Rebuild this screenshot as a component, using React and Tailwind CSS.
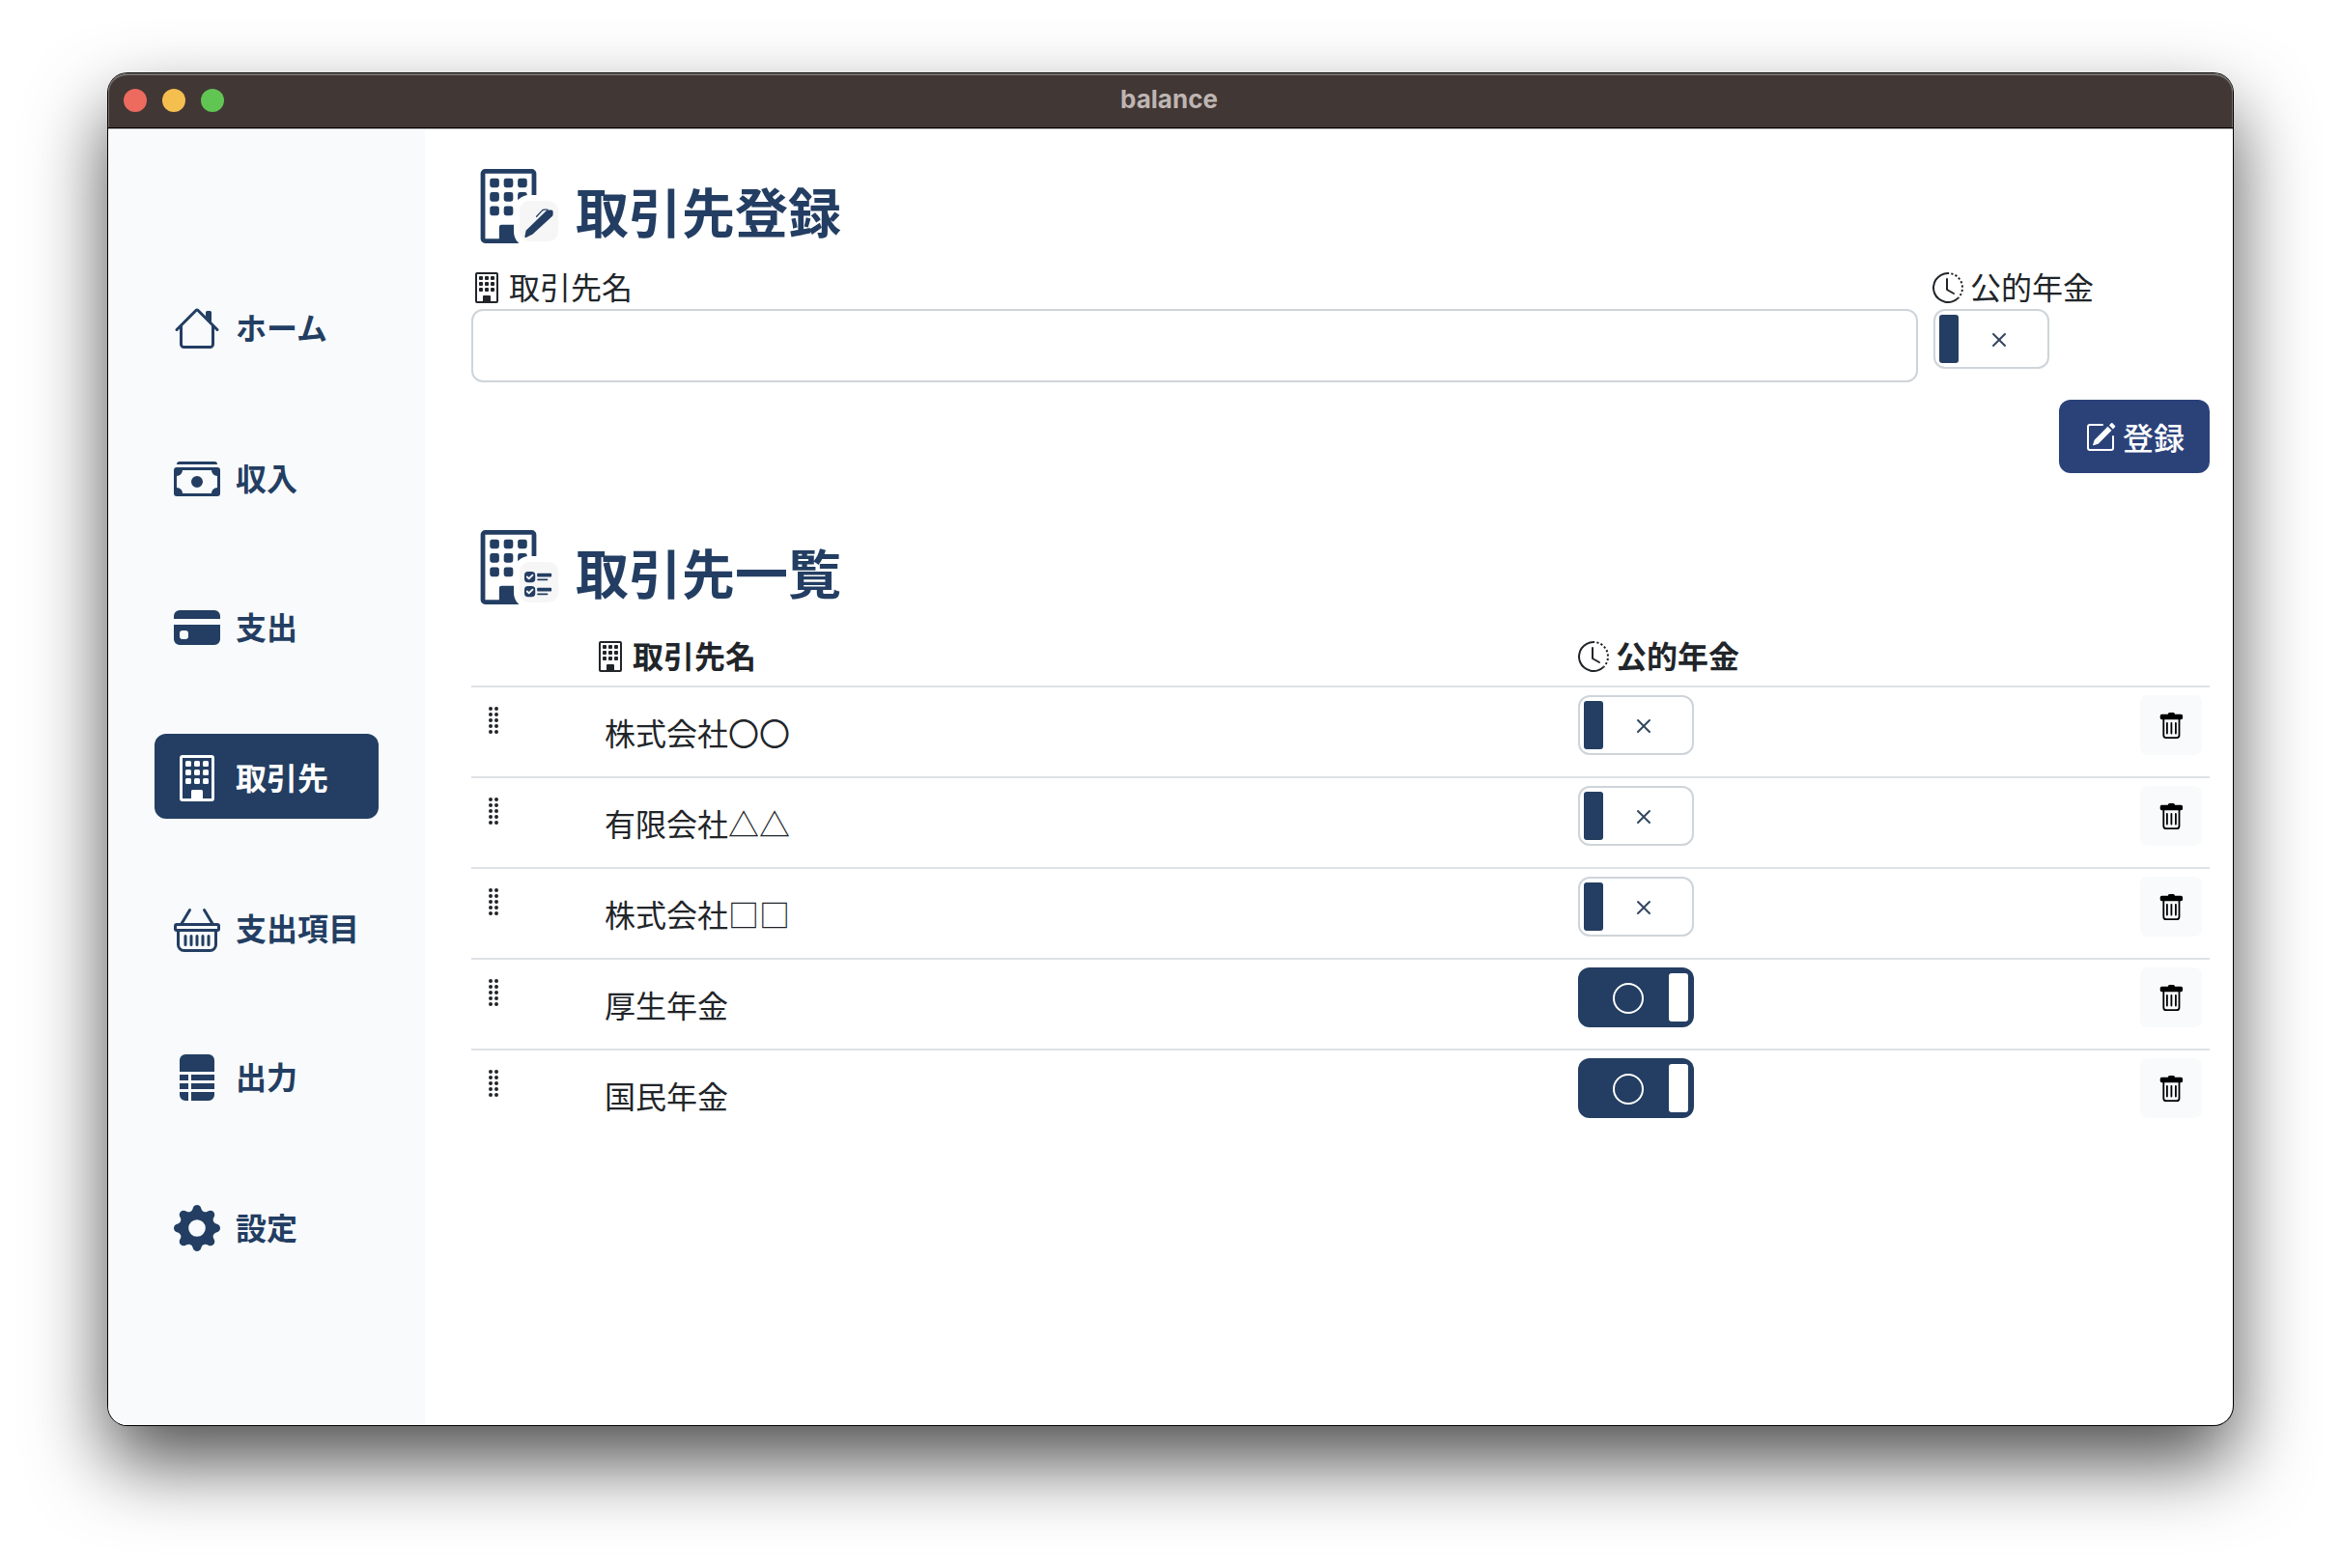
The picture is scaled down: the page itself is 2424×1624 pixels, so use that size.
import React from "react";
import {
  BsBasket,
  BsBuilding,
  BsCashStack,
  BsCircle,
  BsClockHistory,
  BsCreditCardFill,
  BsFileRuledFill,
  BsGearFill,
  BsGripVertical,
  BsPencilSquare,
  BsUiChecks,
  BsX,
} from "react-icons/bs";

function HouseIcon({ className }) {
  return (
    <svg className={className} viewBox="0 0 16 16" fill="currentColor">
      <path
        fillRule="evenodd"
        d="M2 13.5V7h1v6.5a.5.5 0 0 0 .5.5h9a.5.5 0 0 0 .5-.5V7h1v6.5a1.5 1.5 0 0 1-1.5 1.5h-9A1.5 1.5 0 0 1 2 13.5zm11-11V6l-2-2V2.5a.5.5 0 0 1 .5-.5h1a.5.5 0 0 1 .5.5z"
      />
      <path
        fillRule="evenodd"
        d="M7.293 1.5a1 1 0 0 1 1.414 0l6.647 6.646a.5.5 0 0 1-.708.708L8 2.207 1.354 8.854a.5.5 0 1 1-.708-.708L7.293 1.5z"
      />
    </svg>
  );
}

function TrashIcon({ className }) {
  return (
    <svg className={className} viewBox="0 0 16 16" fill="currentColor">
      <path d="M5.5 5.5A.5.5 0 0 1 6 6v6a.5.5 0 0 1-1 0V6a.5.5 0 0 1 .5-.5zm2.5 0a.5.5 0 0 1 .5.5v6a.5.5 0 0 1-1 0V6a.5.5 0 0 1 .5-.5zm3 .5a.5.5 0 0 0-1 0v6a.5.5 0 0 0 1 0V6z" />
      <path
        fillRule="evenodd"
        d="M14.5 3a1 1 0 0 1-1 1H13v9a2 2 0 0 1-2 2H5a2 2 0 0 1-2-2V4h-.5a1 1 0 0 1-1-1V2a1 1 0 0 1 1-1H6a1 1 0 0 1 1-1h2a1 1 0 0 1 1 1h3.5a1 1 0 0 1 1 1v1zM4.118 4 4 4.059V13a1 1 0 0 0 1 1h6a1 1 0 0 0 1-1V4.059L11.882 4H4.118z"
      />
    </svg>
  );
}

function PenIcon({ className }) {
  return (
    <svg className={className} viewBox="0 0 30 30" fill="currentColor">
      <path d="M23.5 1.5H28a1.6 1.6 0 0 1 1.6 1.6V6c0 .8-.2 1.300-.8 1.900L8.600 26.600 1.800 29.900C.9 30.300.3 29.800.4 29L1.600 22.800z" />
      <path
        d="M12.600 8.200 17.800 2.600Q18.800 1.300 20.500 1.100H24"
        fill="none"
        stroke="currentColor"
        strokeWidth="1.3"
        strokeLinecap="round"
      />
    </svg>
  );
}

const navItems = [
  { label: "ホーム", Icon: HouseIcon },
  { label: "収入", Icon: BsCashStack, gap: "mt-[68px]" },
  { label: "支出", Icon: BsCreditCardFill, gap: "mt-[66px]" },
  { label: "取引先", Icon: BsBuilding, gap: "mt-[68px]", active: true },
  { label: "支出項目", Icon: BsBasket, gap: "mt-[68px]" },
  { label: "出力", Icon: BsFileRuledFill, gap: "mt-[66px]" },
  { label: "設定", Icon: BsGearFill, gap: "mt-[68px]" },
];

const partners = [
  { name: "株式会社〇〇", pension: false },
  { name: "有限会社△△", pension: false },
  { name: "株式会社□□", pension: false },
  { name: "厚生年金", pension: true },
  { name: "国民年金", pension: true },
];

function Toggle({ on }) {
  if (on) {
    return (
      <div className="flex h-[62px] w-[120px] items-center justify-between rounded-xl bg-[#233e62] pr-1.5 pl-9 text-white">
        <BsCircle className="mt-px size-8" />
        <div className="h-[50px] w-5 rounded-[3px] bg-white" />
      </div>
    );
  }
  return (
    <div className="flex h-[62px] w-[120px] items-center rounded-xl border-2 border-[#ced4da] bg-white pl-1 text-[#33475f]">
      <div className="h-[50px] w-5 rounded-[3px] bg-[#233e62]" />
      <BsX className="mt-px ml-[26px] size-8" />
    </div>
  );
}

function SectionTitle({ Badge, children }) {
  return (
    <h1 className="flex h-[77px] items-center text-[#233e62]">
      <span className="relative mr-2 block h-[77px] w-[100px] shrink-0">
        <BsBuilding className="size-[77px]" />
        <span className="absolute top-[27px] left-[44px] flex h-[54px] w-[52px] items-center justify-center rounded-2xl border-6 border-white bg-[#f6f6f7] pt-1">
          <Badge className="size-[30px]" />
        </span>
      </span>
      <span className="mt-[7px] text-[55px] leading-[66px] font-bold">{children}</span>
    </h1>
  );
}

function NameLabel() {
  return (
    <span className="flex h-8 items-center gap-[7px]">
      <BsBuilding className="size-8" />
      <span className="-mt-1">取引先名</span>
    </span>
  );
}

function PensionLabel() {
  return (
    <span className="flex h-8 items-center gap-[7px]">
      <BsClockHistory className="size-8" />
      <span className="-mt-1">公的年金</span>
    </span>
  );
}

export default function App() {
  return (
    <div className="h-[1624px] w-[2424px] overflow-hidden bg-white px-28 pt-[76px] font-['Noto_Sans_CJK_JP',sans-serif] text-[32px] leading-[48px] text-[#212529]">
      <div className="flex h-[1400px] w-[2200px] flex-col rounded-[20px] bg-white shadow-[0_0_0_1px_#000,0_38px_80px_rgba(0,0,0,0.69)]">
        <header className="relative flex h-[57px] shrink-0 items-center rounded-t-[20px] border-b border-black bg-[#413735] px-4 shadow-[inset_0_2px_0_#75706d,inset_1px_0_0_#75706d,inset_-1px_0_0_#75706d,0_1px_0_#c4c4c4]">
          <div className="flex w-26 gap-4">
            <span className="size-6 rounded-full bg-[#ed6a5e]" />
            <span className="size-6 rounded-full bg-[#f5bf4f]" />
            <span className="size-6 rounded-full bg-[#61c554]" />
          </div>
          <div className="flex-1 pr-[3px] pb-0.5 text-center font-['Inter',sans-serif] text-[26px] leading-8 font-bold text-[#beb5b2]">
            balance
          </div>
          <div className="w-26" />
        </header>

        <div className="flex min-h-0 flex-1">
          <aside className="w-[328px] shrink-0 rounded-bl-[20px] bg-[#f8fafc] pt-[161px] pl-12">
            <nav className="flex w-[232px] flex-col font-bold">
              {navItems.map(({ label, Icon, gap, active }) => (
                <div key={label} className={gap}>
                  <a
                    className={
                      active
                        ? "flex h-[88px] items-center gap-4 rounded-xl bg-[#233e62] pl-5 text-white"
                        : "flex h-[88px] items-center gap-4 pl-5 text-[#233e62]"
                    }
                  >
                    <Icon className="mt-1 size-12 shrink-0" />
                    <span className="whitespace-nowrap">{label}</span>
                  </a>
                </div>
              ))}
            </nav>
          </aside>

          <main className="flex-1 pt-[42px] pr-6 pl-12">
            <SectionTitle Badge={PenIcon}>取引先登録</SectionTitle>

            <div className="mt-[30px] flex gap-4">
              <label className="flex-1">
                <NameLabel />
                <input className="mt-1.5 block h-[76px] w-full rounded-xl border-2 border-[#ced4da] bg-white" />
              </label>
              <div className="w-[286px]">
                <div className="-ml-px">
                  <PensionLabel />
                </div>
                <div className="mt-1.5">
                  <Toggle />
                </div>
              </div>
            </div>

            <div className="mt-[18px] flex justify-end">
              <button className="flex h-[76px] w-[156px] items-center gap-[7px] rounded-xl bg-[#2b4279] pl-[27px] font-medium text-white">
                <BsPencilSquare className="mt-0.5 size-8" />
                登録
              </button>
            </div>

            <section className="mt-[59px]">
              <SectionTitle Badge={BsUiChecks}>取引先一覧</SectionTitle>
              <div className="mt-[38px] flex h-12 border-b-2 border-[#dee2e6] pl-32 font-bold">
                <div className="w-[1018px]">
                  <NameLabel />
                </div>
                <PensionLabel />
              </div>
              {partners.map(({ name, pension }, i) => (
                <div
                  key={name}
                  className={
                    i < partners.length - 1
                      ? "flex h-[94px] items-start border-b-2 border-[#dee2e6] pr-2 pl-2"
                      : "flex h-[94px] items-start pr-2 pl-2"
                  }
                >
                  <BsGripVertical className="mt-[18px] size-8" />
                  <div className="mt-[22px] ml-[98px] w-[1008px]">{name}</div>
                  <div className="mt-2">
                    <Toggle on={pension} />
                  </div>
                  <button className="mt-2 ml-auto flex h-[62px] w-16 items-center justify-center rounded-lg bg-[#f8fafc] text-black">
                    <TrashIcon className="mt-0.5 size-[28.8px]" />
                  </button>
                </div>
              ))}
            </section>
          </main>
        </div>
      </div>
    </div>
  );
}
